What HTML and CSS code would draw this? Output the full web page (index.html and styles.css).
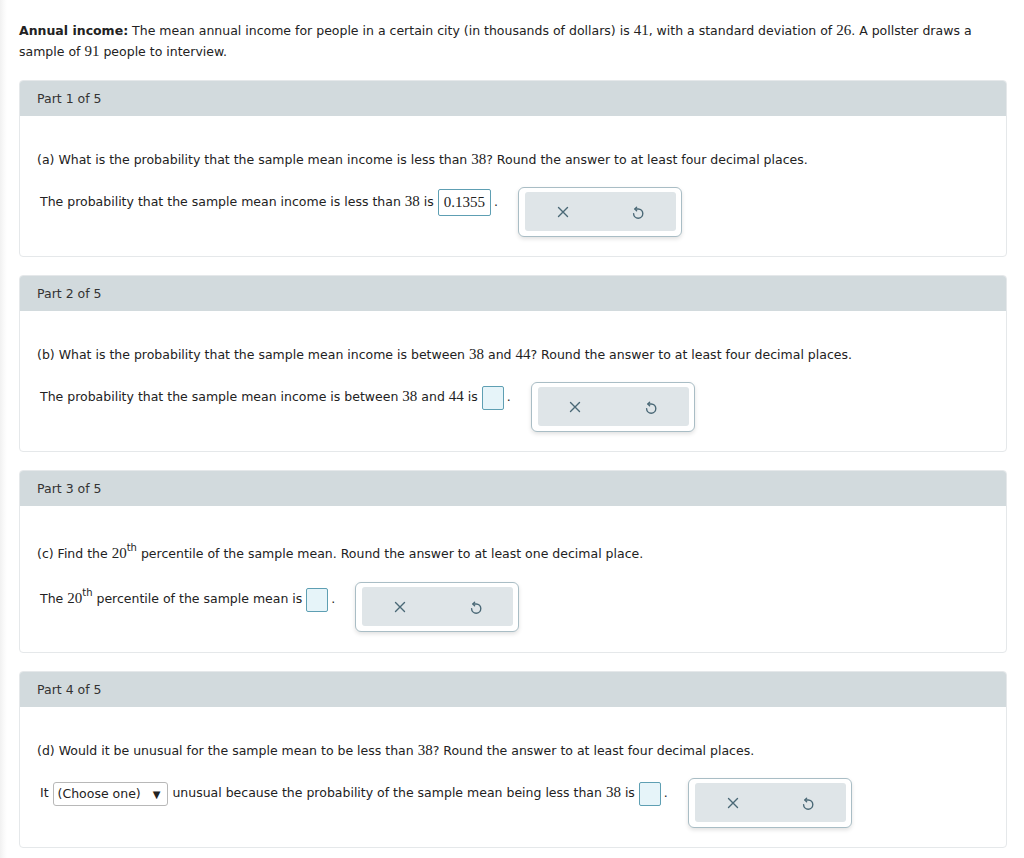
FILE: index.html
```html
<!DOCTYPE html>
<html>
<head>
<meta charset="utf-8">
<link rel="stylesheet" href="styles.css">
</head>
<body>
<div class="page">
  <p class="intro"><b>Annual income:</b> The mean annual income for people in a certain city (in thousands of dollars) is <span class="m">41</span>, with a standard deviation of <span class="m">26</span>. A pollster draws a sample of <span class="m">91</span> people to interview.</p>

  <section class="card c1">
    <div class="card-head">Part 1 of 5</div>
    <div class="card-body">
      <p class="q">(a) What is the probability that the sample mean income is less than <span class="m">38</span>? Round the answer to at least four decimal places.</p>
      <div class="ans-row">
        <div class="ans">The probability that the sample mean income is less than <span class="m">38</span> is <span class="box filled">0.1355</span><span class="dot">.</span></div>
        <div class="tools"><div class="tools-in"><span class="tb"><svg viewBox="0 0 14 14"><path d="M2.5 2.5 L11.5 11.5 M11.5 2.5 L2.5 11.5"/></svg></span><span class="tb"><svg viewBox="0 0 14 14"><path d="M4 4 H7.2 A4.6 4.6 0 1 1 2.6 8.6"/><path d="M5.6 2.3 L3.9 4 L5.6 5.7"/></svg></span></div></div>
      </div>
    </div>
  </section>

  <section class="card c2">
    <div class="card-head">Part 2 of 5</div>
    <div class="card-body">
      <p class="q">(b) What is the probability that the sample mean income is between <span class="m">38</span> and <span class="m">44</span>? Round the answer to at least four decimal places.</p>
      <div class="ans-row">
        <div class="ans">The probability that the sample mean income is between <span class="m">38</span> and <span class="m">44</span> is <span class="box empty"></span><span class="dot">.</span></div>
        <div class="tools"><div class="tools-in"><span class="tb"><svg viewBox="0 0 14 14"><path d="M2.5 2.5 L11.5 11.5 M11.5 2.5 L2.5 11.5"/></svg></span><span class="tb"><svg viewBox="0 0 14 14"><path d="M4 4 H7.2 A4.6 4.6 0 1 1 2.6 8.6"/><path d="M5.6 2.3 L3.9 4 L5.6 5.7"/></svg></span></div></div>
      </div>
    </div>
  </section>

  <section class="card c3">
    <div class="card-head">Part 3 of 5</div>
    <div class="card-body">
      <p class="q">(c) Find the <span class="m">20</span><sup>th</sup> percentile of the sample mean. Round the answer to at least one decimal place.</p>
      <div class="ans-row">
        <div class="ans">The <span class="m">20</span><sup>th</sup> percentile of the sample mean is <span class="box empty"></span><span class="dot">.</span></div>
        <div class="tools"><div class="tools-in"><span class="tb"><svg viewBox="0 0 14 14"><path d="M2.5 2.5 L11.5 11.5 M11.5 2.5 L2.5 11.5"/></svg></span><span class="tb"><svg viewBox="0 0 14 14"><path d="M4 4 H7.2 A4.6 4.6 0 1 1 2.6 8.6"/><path d="M5.6 2.3 L3.9 4 L5.6 5.7"/></svg></span></div></div>
      </div>
    </div>
  </section>

  <section class="card c4">
    <div class="card-head">Part 4 of 5</div>
    <div class="card-body">
      <p class="q">(d) Would it be unusual for the sample mean to be less than <span class="m">38</span>? Round the answer to at least four decimal places.</p>
      <div class="ans-row">
        <div class="ans">It <span class="sel">(Choose one)<span class="arr">&#9660;</span></span> unusual because the probability of the sample mean being less than <span class="m">38</span> is <span class="box empty"></span><span class="dot">.</span></div>
        <div class="tools"><div class="tools-in"><span class="tb"><svg viewBox="0 0 14 14"><path d="M2.5 2.5 L11.5 11.5 M11.5 2.5 L2.5 11.5"/></svg></span><span class="tb"><svg viewBox="0 0 14 14"><path d="M4 4 H7.2 A4.6 4.6 0 1 1 2.6 8.6"/><path d="M5.6 2.3 L3.9 4 L5.6 5.7"/></svg></span></div></div>
      </div>
    </div>
  </section>
</div>
</body>
</html>
```

FILE: styles.css
```css
html, body {
  margin: 0;
  padding: 0;
  background: #fff;
}
body {
  font-family: "DejaVu Sans", Verdana, sans-serif;
  font-size: 12.5px;
  color: #222;
  background: linear-gradient(to right, #f1f1f1 0, #fafafa 4px, #fff 7px);
  height: 858px;
  overflow: hidden;
}
.page {
  padding: 20px 17px 0 19px;
}
p { margin: 0; }
.intro {
  line-height: 21px;
  margin-bottom: 18px;
}
.m {
  font-family: "Liberation Serif", "Times New Roman", serif;
  font-size: 15px;
}
.card {
  border: 1px solid #e5e8ea;
  border-radius: 4px;
  margin-bottom: 18px;
  background: #fff;
  overflow: hidden;
}
.card-head {
  background: #d2dadd;
  height: 35px;
  line-height: 35px;
  padding-left: 17px;
  color: #333;
}
.card-body {
  padding: 33px 18px 19px 17px;
}
.c3 .card-body { padding-bottom: 20px; }
.q {
  line-height: 20px;
  margin-bottom: 17px;
}
.c3 .q { padding-top: 4px; margin-bottom: 18px; }
.ans-row {
  display: flex;
  align-items: flex-start;
}
.ans {
  line-height: 28px;
  height: 28px;
  padding-left: 3px;
  white-space: nowrap;
}
.c3 .ans { margin-top: 2px; }
sup {
  font-size: 10px;
  line-height: 0;
  vertical-align: baseline;
  position: relative;
  top: -7px;
}
.box {
  display: inline-block;
  border: 1px solid #5e9fb3;
  border-radius: 2px;
  box-sizing: border-box;
  vertical-align: middle;
}
.box.filled {
  font-family: "Liberation Serif", "Times New Roman", serif;
  font-size: 15px;
  height: 27px;
  line-height: 25px;
  padding: 0 5px;
}
.box.empty {
  width: 22px;
  height: 24px;
  background: #e6f4f9;
}
.dot { margin-left: 3px; }
.sel {
  display: inline-block;
  border: 1px solid #b8b8b8;
  border-radius: 3px;
  height: 24px;
  line-height: 22px;
  box-sizing: border-box;
  padding: 0 7px 0 4px;
  vertical-align: middle;
}
.arr {
  font-size: 10px;
  margin-left: 12px;
}
.tools {
  margin-left: 20px;
  border: 1px solid #a9bdc5;
  border-radius: 6px;
  background: #fff;
  padding: 4px 5px 5px 6px;
  box-shadow: 0 2px 4px rgba(0, 0, 0, 0.12);
}
.tools-in {
  display: flex;
  background: #dfe5e8;
  border-radius: 3px;
  width: 151px;
  height: 39px;
}
.tb {
  flex: 1;
  display: flex;
  align-items: center;
  justify-content: center;
}
.tb svg {
  width: 14px;
  height: 14px;
  fill: none;
  stroke: #4a6876;
  stroke-width: 1.4;
  stroke-linecap: round;
  stroke-linejoin: round;
}
```
